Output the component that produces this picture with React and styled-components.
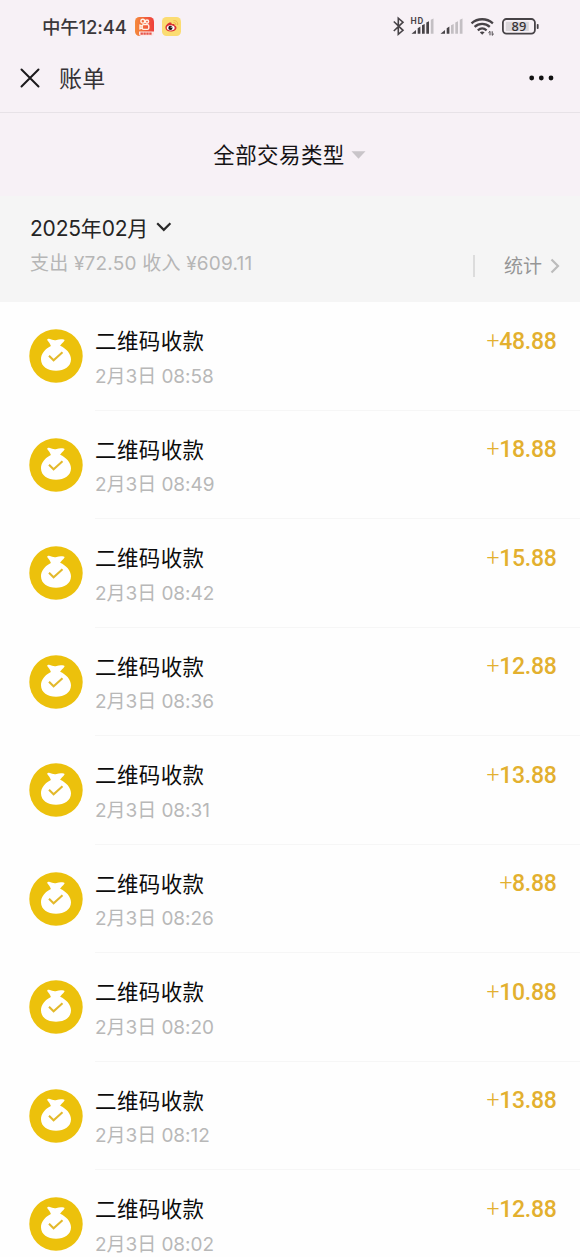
import React from "react";
import styled, { createGlobalStyle } from "styled-components";

const GlobalStyle = createGlobalStyle`
  * {
    box-sizing: border-box;
  }
  body {
    margin: 0;
    background: #fefefe;
    font-family: Inter, "Noto Sans CJK SC", sans-serif;
  }
  svg {
    display: block;
    flex-shrink: 0;
  }
`;

const Page = styled.div`
  width: 580px;
  height: 1257px;
  overflow: hidden;
  background: #fefefe;
`;

const Header = styled.header`
  height: 113px;
  background: #f7f1f6;
  border-bottom: 1px solid #e7e2e7;
`;

const StatusBar = styled.div`
  display: flex;
  align-items: center;
  height: 53px;
  padding: 0 41px 0 42px;
`;

const Clock = styled.div`
  width: 93px;
  font-size: 18.5px;
  font-weight: 500;
  line-height: 24px;
  letter-spacing: -0.2px;
  color: #3b383b;
  white-space: nowrap;
`;

const AppIcons = styled.div`
  display: flex;
  gap: 8px;
  margin-right: auto;
`;

const NavBar = styled.div`
  display: flex;
  align-items: center;
  height: 49px;
  padding: 0 26px 0 20px;
`;

const NavTitle = styled.h1`
  flex: 1;
  margin: 0 0 0 19px;
  padding-top: 2px;
  font-size: 23px;
  font-weight: 400;
  line-height: 30px;
  letter-spacing: 0.3px;
  color: #363336;
`;

const Filter = styled.div`
  display: flex;
  align-items: center;
  justify-content: center;
  gap: 6px;
  height: 83px;
  padding: 1px 1px 0 0;
  background: #f7f1f6;
  font-size: 21.5px;
  line-height: 30px;
  letter-spacing: 0.4px;
  color: #151315;
`;

const Summary = styled.section`
  display: flex;
  justify-content: space-between;
  height: 106px;
  padding: 16px 20px 0 30px;
  background: #f5f5f5;
`;

const Month = styled.div`
  display: flex;
  align-items: center;
  gap: 8px;
  height: 30px;
  font-size: 21px;
  letter-spacing: -0.2px;
  color: #242424;
`;

const Totals = styled.div`
  margin-top: 8px;
  font-size: 19px;
  line-height: 28px;
  letter-spacing: 0.2px;
  color: #b6b6b6;
  white-space: nowrap;
`;

const Stats = styled.div`
  display: flex;
  align-items: center;
  height: 22px;
  margin-top: 43px;
  padding-left: 29px;
  border-left: 2px solid #dcdcdc;
  font-size: 19px;
  line-height: 24px;
  color: #969696;

  svg {
    margin-left: 8px;
  }
`;

const StatsLabel = styled.span`
  padding-top: 2px;
`;

const List = styled.ul`
  margin: 0;
  padding: 0;
  list-style: none;
`;

const Row = styled.li`
  display: flex;
  height: 108.5px;
  padding-left: 29px;
`;

const Avatar = styled.div`
  width: 66px;
  padding-top: 27px;
`;

const Content = styled.div`
  display: flex;
  flex: 1;
  justify-content: space-between;
  padding: 24px 23.5px 0 0;
  border-bottom: 1px solid #f6f6f6;
`;

const Title = styled.div`
  font-size: 21.5px;
  line-height: 30px;
  letter-spacing: 0.4px;
  color: #0c0c0c;
`;

const Time = styled.div`
  margin-top: 6.5px;
  font-size: 19px;
  line-height: 28px;
  letter-spacing: -0.05px;
  color: #b8b8b8;
`;

const Amount = styled.div`
  padding-top: 0.5px;
  font-family: Roboto, sans-serif;
  font-size: 23px;
  font-weight: 500;
  line-height: 30px;
  letter-spacing: -0.3px;
  color: #e3b02f;
`;

const Plus = styled.span`
  font-weight: 300;
`;

const records = [
  { time: "08:58", amount: "48.88" },
  { time: "08:49", amount: "18.88" },
  { time: "08:42", amount: "15.88" },
  { time: "08:36", amount: "12.88" },
  { time: "08:31", amount: "13.88" },
  { time: "08:26", amount: "8.88" },
  { time: "08:20", amount: "10.88" },
  { time: "08:12", amount: "13.88" },
  { time: "08:02", amount: "12.88" },
];

const VideoAppIcon = () => (
  <svg width="19" height="19" viewBox="0 0 19 19">
    <defs>
      <linearGradient id="video" x1="0" y1="0" x2="1" y2="0">
        <stop offset="0" stopColor="#f58a3c" />
        <stop offset="1" stopColor="#ee3f3c" />
      </linearGradient>
    </defs>
    <rect width="19" height="19" rx="4.5" fill="url(#video)" />
    <g fill="none" stroke="#fff3e8" strokeWidth="1.4">
      <circle cx="7.8" cy="4.2" r="1.9" />
      <circle cx="12" cy="4.6" r="1.6" />
      <rect x="7.2" y="7.6" width="6.6" height="4.8" rx="1.3" />
      <path d="M7 9 5 8.2v3.6l2-.8" />
    </g>
    <path d="M4 14.6h15v1.4a3 3 0 0 1-3 3H6a2 2 0 0 1-2-2z" fill="#fbe9e7" />
    <path d="M5.5 16.7h11.5" stroke="#e8564b" strokeWidth="2.2" strokeDasharray="2.4 .5" />
  </svg>
);

const WeiboIcon = () => (
  <svg width="19" height="19" viewBox="0 0 19 19">
    <rect width="19" height="19" rx="4.5" fill="#fbdc72" />
    <path d="M3.4 10.8c0-2.8 3.2-5.6 5.3-5.3 1.2.2 1 1.3.9 1.7 1.7-.6 3.2-.4 3 1.2 1.1.4 1.9 1.1 1.9 2.3 0 2.2-2.7 3.8-5.8 3.8s-5.3-1.5-5.3-3.7z" fill="#dc3033" />
    <ellipse cx="8.7" cy="10.8" rx="3.9" ry="2.6" fill="#fff" />
    <circle cx="8.4" cy="10.9" r="2.1" fill="#161010" />
    <circle cx="9.2" cy="10.2" r=".6" fill="#fff" />
    <path d="M11.9 3.6c2.6-.3 4.3 1.7 3.7 4.2M12 5.6c1.3-.1 2 .7 1.8 1.9" fill="none" stroke="#f0b550" strokeWidth="1" strokeLinecap="round" />
  </svg>
);

const StatusIcons = () => (
  <svg width="147" height="24" viewBox="392 15 147 24">
    <path d="m393.8 21.5 9.2 8.8-4.7 4V18.2l4.7 4-9.2 8.8" fill="none" stroke="#474347" strokeWidth="1.6" />
    <text x="410.6" y="23.8" fontFamily="Roboto, sans-serif" fontSize="8.8" fontWeight="600" letterSpacing=".7" fill="#474347">HD</text>
    <g fill="#474347">
      <path d="M411.5 33.8 416 30v3.8z" />
      <path d="M417.7 28.2l2.7-1.6v7.2h-2.7z" />
      <path d="M422 25.2l2.7-1.3v9.9H422z" />
      <path d="M426.3 22.4l2.7-1.2v12.6h-2.7z" />
      <path d="M440.5 33.8 445 30v3.8z" />
      <path d="M446.7 28.2l2.7-1.6v7.2h-2.7z" />
    </g>
    <g fill="#c3bfc3">
      <path d="M430.8 19.7l2.7-1.2v15.3h-2.7z" />
      <path d="M451 25.2l2.7-1.3v9.9H451z" />
      <path d="M455.3 22.4l2.7-1.2v12.6h-2.7z" />
      <path d="M459.8 19.7l2.7-1.2v15.3h-2.7z" />
    </g>
    <g fill="none" stroke="#474347" strokeWidth="2.3">
      <path d="M471.5 23.3c6.2-5.4 15.2-5.4 21.4 0" />
      <path d="M474.6 26.9c4.5-4 10.7-4 15.2 0" />
      <path d="M477.8 30.3c2.7-2.3 6.1-2.3 8.8 0" />
    </g>
    <path d="m479.8 32.2 2.4 2.6 2.4-2.6c-1.4-1-3.4-1-4.8 0z" fill="#474347" />
    <path d="M490 35.3v-4l-1.6 1.5M492.2 31.3v4l1.6-1.5" fill="none" stroke="#474347" strokeWidth="1" />
    <rect x="502.9" y="19" width="32" height="14.7" rx="3.6" fill="none" stroke="#474347" strokeWidth="1.8" />
    <rect x="505.8" y="21.8" width="23" height="9.2" fill="#dad6da" />
    <rect x="536.8" y="24" width="1.8" height="5" rx=".8" fill="#474347" />
    <text x="518.9" y="31.1" textAnchor="middle" fontFamily='"Noto Sans", sans-serif' fontSize="12.8" fontWeight="500" fill="#333033">89</text>
  </svg>
);

const MoneyBag = () => (
  <svg width="54" height="54" viewBox="0 0 54 54">
    <circle cx="27" cy="27" r="26.7" fill="#ecc10c" />
    <path
      d="M18.5 11.4c-.7-1.2.2-2 1.6-1.6 2.9.8 5 1.9 7.500 1.1 2.3-.8 4.9-.9 7.100-.4.9.3 1.1.8.5 1.5-1.2 1.6-3 3-4.1 4.7 6 2.5 10.9 7.9 10.9 13.6 0 7.4-6.600 11.400-15 11.400s-15-4-15-11.400c0-5.500 4-10.700 9.900-13.400-.7-2.100-2-3.900-3.400-5.500z"
      fill="#fff"
    />
    <path d="m20 26.7 4.6 4.6 8.9-8.1" fill="none" stroke="#e3b92b" strokeWidth="2" />
  </svg>
);

const Record = ({ time, amount }) => {
  return (
    <Row>
      <Avatar>
        <MoneyBag />
      </Avatar>
      <Content>
        <div>
          <Title>二维码收款</Title>
          <Time>2月3日 {time}</Time>
        </div>
        <Amount>
          <Plus>+</Plus>
          {amount}
        </Amount>
      </Content>
    </Row>
  );
};

const App = () => {
  return (
    <Page>
      <GlobalStyle />
      <Header>
        <StatusBar>
          <Clock>中午12:44</Clock>
          <AppIcons>
            <VideoAppIcon />
            <WeiboIcon />
          </AppIcons>
          <StatusIcons />
        </StatusBar>
        <NavBar>
          <svg width="20" height="20" viewBox="0 0 20 20">
            <path d="m1.5 1.5 17 17m0-17-17 17" stroke="#1b191b" strokeWidth="2" strokeLinecap="round" />
          </svg>
          <NavTitle>账单</NavTitle>
          <svg width="25" height="6" viewBox="0 0 25 6" fill="#111">
            <circle cx="2.7" cy="3" r="2.4" />
            <circle cx="12.3" cy="3" r="2.4" />
            <circle cx="22" cy="3" r="2.4" />
          </svg>
        </NavBar>
      </Header>
      <Filter>
        全部交易类型
        <svg width="15" height="8" viewBox="0 0 15 8">
          <path d="M.5.3h14l-7 7.4z" fill="#c9c5c9" />
        </svg>
      </Filter>
      <Summary>
        <div>
          <Month>
            2025年02月
            <svg width="16" height="10" viewBox="0 0 16 10">
              <path d="m1.2 1.3 6.6 6.6 6.6-6.6" fill="none" stroke="#2a2a2a" strokeWidth="2.2" />
            </svg>
          </Month>
          <Totals>支出 ¥72.50 收入 ¥609.11</Totals>
        </div>
        <Stats>
          <StatsLabel>统计</StatsLabel>
          <svg width="10" height="16" viewBox="0 0 10 16">
            <path d="m1.5 1.5 6.5 6.5-6.5 6.5" fill="none" stroke="#bcbcbc" strokeWidth="2.2" />
          </svg>
        </Stats>
      </Summary>
      <List>
        {records.map((record) => (
          <Record key={record.time} {...record} />
        ))}
      </List>
    </Page>
  );
};

export default App;
